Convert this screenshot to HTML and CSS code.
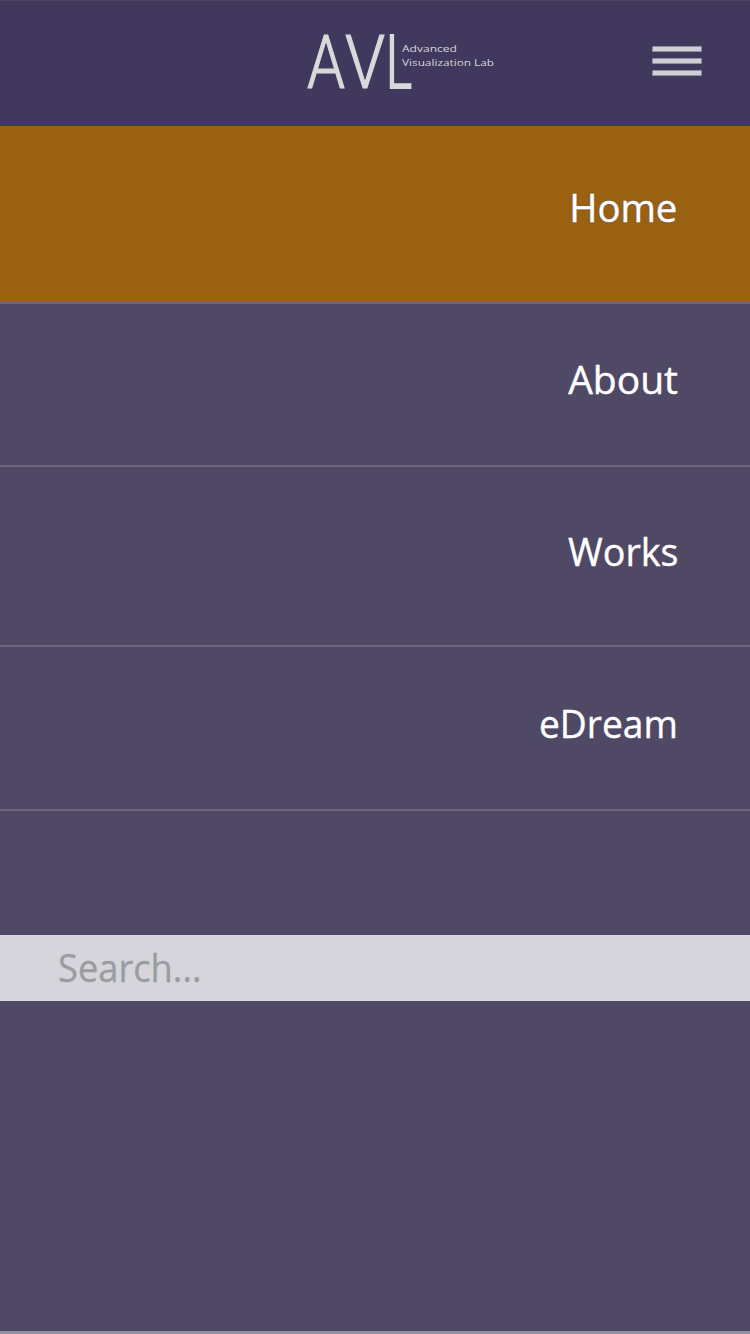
FILE: index.html
```html
<!DOCTYPE html>
<html lang="en">
<head>
<meta charset="utf-8">
<title>Advanced Visualization Lab</title>
<link rel="stylesheet" href="styles.css">
</head>
<body>
<div class="page">
  <header class="header">
    <svg class="logo" viewBox="0 0 200 70" role="img" aria-label="AVL Advanced Visualization Lab">
      <g class="logo-mark">
        <text x="7" y="61" textLength="38" lengthAdjust="spacingAndGlyphs">A</text>
        <text x="45" y="61" textLength="40" lengthAdjust="spacingAndGlyphs">V</text>
        <text class="logo-l" x="86" y="61" textLength="26" lengthAdjust="spacingAndGlyphs">L</text>
      </g>
      <g class="logo-name">
        <text x="102" y="24.500" textLength="55" lengthAdjust="spacingAndGlyphs">Advanced</text>
        <text x="102" y="38.500" textLength="92" lengthAdjust="spacingAndGlyphs">Visualization Lab</text>
      </g>
    </svg>
    <button class="menu-toggle" aria-label="Menu"><span class="bar"></span><span class="bar"></span><span class="bar"></span></button>
  </header>
  <nav class="menu">
    <a class="item home"><span>Home</span></a>
    <a class="item about"><span>About</span></a>
    <a class="item works"><span>Works</span></a>
    <a class="item edream"><span>eDream</span></a>
  </nav>
  <div class="search"><span>Search...</span></div>
</div>
</body>
</html>
```
FILE: styles.css
```css
* { box-sizing: border-box; }
body { margin: 0; background: #fff; }
.page {
  display: flex;
  flex-direction: column;
  height: 1334px;
  background: #504966;
  border-bottom: 3px solid #93929c;
  font-family: "Open Sans", "Noto Sans", sans-serif;
  font-size: 39px;
  line-height: 54px;
  color: #fff;
}
.header {
  display: flex;
  justify-content: space-between;
  align-items: flex-start;
  height: 126px;
  padding: 26px 48px 0 300px;
  background: #41385d;
  border-top: 1px solid #4e4669;
}
.logo { width: 200px; height: 70px; overflow: visible; }
.logo-mark { font-family: Roboto, sans-serif; font-size: 75px; font-weight: 300; fill: #d9d9d9; stroke: #d9d9d9; stroke-width: 1.2px; }
.logo-l { stroke-width: 2px; }
.logo-name { font-family: "Open Sans", sans-serif; font-size: 9.5px; font-weight: 500; fill: #d5d3dc; }
.menu-toggle {
  display: flex;
  flex-direction: column;
  gap: 6px;
  margin-top: 19px;
  padding: 0;
  border: 0;
  background: none;
}
.bar { width: 50px; height: 6px; background: #d0ced5; border: 1px solid #928da1; border-radius: 1px; }
.menu { display: flex; flex-direction: column; }
.item {
  display: flex;
  justify-content: flex-end;
  padding-right: 72px;
  border-bottom: 2px solid #6b667b;
  -webkit-text-stroke: .4px #fff;
}
.item span, .search span { display: inline-block; transform-origin: right center; }
.home { height: 178px; padding: 54px 73px 0 0; background: #9a6210; text-shadow: 0 0 2px #59558a; }
.home span { transform: scaleX(.98); }
.about { height: 163px; padding-top: 48px; }
.works { height: 180px; padding-top: 57px; }
.works span { transform: scaleX(.965); }
.edream { height: 164px; padding-top: 49px; }
.edream span { transform: scaleX(.952); }
.search {
  height: 66px;
  margin-top: 124px;
  padding: 4px 58px;
  background: #d6d5db;
  border: solid #dfdde4;
  border-width: 1px 0;
  color: #999ca0;
  -webkit-text-stroke: .3px #999ca0;
}
.search span { transform: scaleX(.93); transform-origin: left center; }
```
